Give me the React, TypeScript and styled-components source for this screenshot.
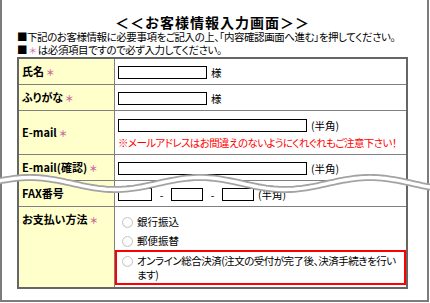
import styled, { createGlobalStyle } from 'styled-components';

const GlobalStyle = createGlobalStyle`
  html, body {
    margin: 0;
    padding: 0;
    background: #fff;
  }
  body {
    font-family: "Noto Sans CJK JP", "Noto Sans", sans-serif;
    color: #000;
  }
`;

// the "cut" band drawn across the form
const buildWave = () => {
  const pts: string[] = [];
  for (let x = -10; x <= 440; x += 4) {
    const y = 183.5 + 6 * Math.sin(((x - 30) / 170) * 2 * Math.PI - Math.PI / 2);
    pts.push(`${x},${y.toFixed(1)}`);
  }
  return 'M' + pts.join(' L');
};

const wave = buildWave();

const App = () => {
  return (
    <Page>
      <GlobalStyle />
      <Frame>
        <Title>＜＜お客様情報入力画面＞＞</Title>
        <Notice>■下記のお客様情報に必要事項をご記入の上、「内容確認画面へ進む」を押してください。</Notice>
        <Notice>
          ■ <Star>＊</Star> は必須項目ですので必ず入力してください。
        </Notice>
        <FormTable>
          <tbody>
            <tr>
              <LabelCell>
                氏名 <Star>＊</Star>
              </LabelCell>
              <ValueCell>
                <FieldLine>
                  <TextInput $w={89} />
                  <span>様</span>
                </FieldLine>
              </ValueCell>
            </tr>
            <tr>
              <LabelCell>
                ふりがな <Star>＊</Star>
              </LabelCell>
              <ValueCell>
                <FieldLine>
                  <TextInput $w={89} />
                  <span>様</span>
                </FieldLine>
              </ValueCell>
            </tr>
            <tr>
              <LabelCell>
                E-mail <Star>＊</Star>
              </LabelCell>
              <ValueCell $tall>
                <FieldLine>
                  <TextInput $w={189} />
                  <span>(半角)</span>
                </FieldLine>
                <Warning>※メールアドレスはお間違えのないようにくれぐれもご注意下さい！</Warning>
              </ValueCell>
            </tr>
            <tr>
              <LabelCell>
                E-mail(確認) <Star>＊</Star>
              </LabelCell>
              <ValueCell>
                <FieldLine>
                  <TextInput $w={189} />
                  <span>(半角)</span>
                </FieldLine>
              </ValueCell>
            </tr>
            <tr>
              <LabelCell>FAX番号</LabelCell>
              <ValueCell>
                <FieldLine>
                  <TextInput $w={34} />
                  <Dash>-</Dash>
                  <TextInput $w={32} />
                  <Dash>-</Dash>
                  <TextInput $w={32} />
                  <span>(半角)</span>
                </FieldLine>
              </ValueCell>
            </tr>
            <tr>
              <LabelCell $top>
                お支払い方法 <Star>＊</Star>
              </LabelCell>
              <PaymentCell>
                <RadioItem>
                  <Radio />
                  <span>銀行振込</span>
                </RadioItem>
                <RadioItem>
                  <Radio />
                  <span>郵便振替</span>
                </RadioItem>
                <RadioItem $highlight>
                  <Radio />
                  <OptionText>
                    オンライン総合決済(注文の受付が完了後、決済手続きを行い
                    <br />
                    ます)
                  </OptionText>
                </RadioItem>
              </PaymentCell>
            </tr>
          </tbody>
        </FormTable>
      </Frame>
      <Cut viewBox="0 0 430 303" width="430" height="303">
        <path d={wave} fill="none" stroke="#a3a3a3" strokeWidth="7" />
        <path d={wave} fill="none" stroke="#fff" strokeWidth="3.4" />
      </Cut>
    </Page>
  );
};

export default App;

const Page = styled.div`
  position: relative;
  width: 430px;
  height: 303px;
  overflow: hidden;
`;

const Frame = styled.div`
  width: 429px;
  height: 302px;
  box-sizing: border-box;
  border: 2px solid #7c7c7c;
  border-top: none;
  padding: 14px 0 0 15px;
`;

const Title = styled.div`
  width: 391px;
  text-align: center;
  font-size: 14px;
  font-weight: bold;
  line-height: 16px;
  letter-spacing: 1px;
`;

const Notice = styled.div`
  font-size: 10.5px;
  line-height: 13px;
  letter-spacing: -0.45px;
  font-feature-settings: "palt";
  white-space: nowrap;
`;

const Star = styled.span`
  color: #cc6699;
  font-size: 9px;
`;

const FormTable = styled.table`
  width: 391px;
  table-layout: fixed;
  border: 2px solid #666;
  border-spacing: 0;
  font-size: 10.5px;
  font-feature-settings: "palt";
  tr:last-child td {
    border-bottom: none;
  }
`;

const LabelCell = styled.td<{ $top?: boolean }>`
  width: 96px;
  box-sizing: border-box;
  background: #ffffcc;
  border-right: 1px solid #808080;
  border-bottom: 1px solid #808080;
  padding: ${(p) => (p.$top ? '6px 3px 0' : '0 3px')};
  vertical-align: ${(p) => (p.$top ? 'top' : 'middle')};
  font-size: 11px;
  font-weight: bold;
  line-height: 13px;
  white-space: nowrap;
`;

const ValueCell = styled.td<{ $tall?: boolean }>`
  border-bottom: 1px solid #808080;
  padding: ${(p) => (p.$tall ? '7px 3px 4px' : '6px 3px 5px')};
  line-height: 13px;
`;

const FieldLine = styled.div`
  display: flex;
  align-items: center;
  gap: 4px;
  height: 14px;
`;

const TextInput = styled.input<{ $w: number }>`
  width: ${(p) => p.$w}px;
  height: 13px;
  box-sizing: border-box;
  border: 1px solid #000;
  padding: 0;
  margin: 0;
  background: #fff;
`;

const Dash = styled.span`
  width: 11px;
  text-align: center;
`;

const Warning = styled.div`
  margin-top: 4px;
  height: 14px;
  color: #ff0000;
  letter-spacing: -0.6px;
  white-space: nowrap;
`;

const PaymentCell = styled.td`
  padding: 5px 0 2px;
  vertical-align: top;
`;

const RadioItem = styled.div<{ $highlight?: boolean }>`
  display: flex;
  align-items: ${(p) => (p.$highlight ? 'flex-start' : 'center')};
  gap: 4px;
  min-height: 19px;
  box-sizing: border-box;
  border: 2px solid ${(p) => (p.$highlight ? '#ff0000' : 'transparent')};
  padding: ${(p) => (p.$highlight ? '2px 5px 1px' : '0 5px')};
  line-height: 13px;
`;

const OptionText = styled.span`
  line-height: 14px;
  letter-spacing: -0.5px;
  white-space: nowrap;
`;

const Radio = styled.span`
  flex: none;
  width: 11px;
  height: 11px;
  margin-top: 2px;
  border-radius: 50%;
  border: 1px solid #c6c6c6;
  background: radial-gradient(circle at 50% 40%, #fff 40%, #ececec 100%);
  box-sizing: border-box;
`;

const Cut = styled.svg`
  position: absolute;
  left: 0;
  top: 0;
  pointer-events: none;
`;
